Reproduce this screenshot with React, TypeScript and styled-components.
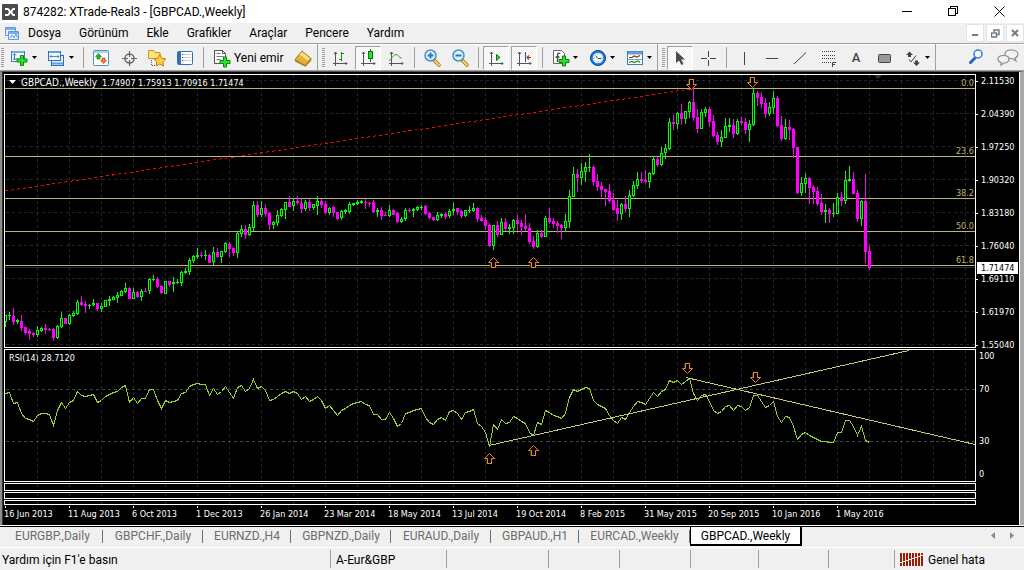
import React from "react";
import styled, { createGlobalStyle, css } from "styled-components";

const UI_FONT = 'Roboto, "Noto Sans", sans-serif';
const CHART_FONT = '"DejaVu Sans Condensed", "DejaVu Sans", sans-serif';

const GlobalStyle = createGlobalStyle`
  * { box-sizing: border-box; }
  body { margin: 0; background: #f0f0f0; font-family: ${UI_FONT}; font-size: 12px; color: #000; }
  button { font: inherit; color: inherit; border: 0; background: none; padding: 0; margin: 0; }
`;

const Window = styled.div`
  display: flex;
  flex-direction: column;
  min-height: 100vh;
  overflow: hidden;
`;

/* ---------- title and menu ---------- */

const TitleBar = styled.header`
  display: flex;
  align-items: center;
  height: 23px;
  padding: 0 2px;
  background: #fff;
`;

const Title = styled.h1`
  flex: 1;
  margin: 0 0 0 5px;
  font-size: 12px;
  line-height: 20px;
  font-weight: 400;
  white-space: nowrap;
`;

const WindowButton = styled.button`
  display: flex;
  align-items: center;
  justify-content: center;
  width: 46px;
  height: 22px;
`;

const MenuBar = styled.nav`
  display: flex;
  align-items: center;
  height: 20px;
  padding-left: 4px;
`;

const MenuList = styled.div`
  display: flex;
  flex: 1;
  gap: 18px;
  padding-left: 8px;
`;

const MenuItem = styled.button`
  line-height: 18px;
  white-space: nowrap;
`;

const MdiButtons = styled.div`
  display: flex;
  gap: 2px;
`;

const MdiButton = styled.button`
  display: flex;
  align-items: center;
  justify-content: center;
  width: 18px;
  height: 18px;
  border: 1px solid #e3e3e3;
  background: #fff;
`;

/* ---------- toolbar ---------- */

const ToolBar = styled.div`
  display: flex;
  align-items: stretch;
  height: 28px;
  border-top: 1px solid #a0a0a0;
  border-bottom: 1px solid #a0a0a0;
  box-shadow: inset 0 1px #fff;
`;

const ToolGroup = styled.div`
  display: flex;
  align-items: center;
  gap: 2px;
  padding: 1px 1px 0;
  border-right: 1px solid #a0a0a0;
  & + & {
    margin-left: 3px;
  }
`;

const Grip = styled.span`
  width: 3px;
  height: 20px;
  background: repeating-linear-gradient(#a0a0a0 0 1px, transparent 1px 2px);
`;

const Separator = styled.span`
  width: 1px;
  height: 21px;
  margin: 0 2px 0 3px;
  background: #a0a0a0;
`;

const ToolButton = styled.button<{ $pressed?: boolean }>`
  display: flex;
  align-items: center;
  justify-content: center;
  width: 26px;
  height: 24px;
  border: 1px solid transparent;
  ${(p) =>
    p.$pressed &&
    css`
      border-color: #a0a0a0 #fff #fff #a0a0a0;
      background: repeating-conic-gradient(#fff 0 25%, #f0f0f0 0 50%) 0 0 / 2px 2px;
    `}
`;

const DropButton = styled(ToolButton)`
  width: 35px;
  justify-content: flex-start;
  padding-left: 3px;
  gap: 2px;
`;

const TextButton = styled(ToolButton)`
  width: 80px;
  justify-content: flex-start;
  padding-left: 4px;
  gap: 3px;
  white-space: nowrap;
`;

const ToolEnd = styled.div`
  display: flex;
  flex: 1;
  align-items: center;
  justify-content: flex-end;
  gap: 6px;
  padding-right: 3px;
`;

/* ---------- chart ---------- */

const ChartFrame = styled.main`
  flex: 1;
  padding: 2px 0 0 2px;
  border-left: 2px solid #8c8c8c;
  border-right: 4px solid #a9a9a9;
  border-top: 1px solid #555;
  box-shadow: inset -1px 0 #fff, inset 1px 0 #333;
  background: #000;
  color: #fff;
  font-family: ${CHART_FONT};
  font-size: 9px;
  line-height: 12px;
`;

const PaneRow = styled.div`
  display: flex;
  margin-bottom: 1px;
`;

const Pane = styled.section<{ $height: number }>`
  position: relative;
  flex: 1;
  min-width: 0;
  height: ${(p) => p.$height}px;
  border: 1px solid #fff;
  overflow: hidden;
`;

const Drawing = styled.svg`
  display: block;
  width: 100%;
  height: 100%;
  font-family: ${CHART_FONT};
  font-size: 9px;
`;

const PaneLabel = styled.div`
  position: absolute;
  top: 2px;
  left: 4px;
  display: flex;
  align-items: baseline;
  gap: 5px;
  white-space: pre;
`;

const SymbolName = styled.span`
  font-size: 10px;
`;

const Axis = styled.div`
  position: relative;
  width: 44px;
  height: 0;
  padding-top: 1px;
`;

const AxisLabel = styled.div<{ $space: number; $tick?: boolean }>`
  display: flex;
  align-items: center;
  gap: ${(p) => (p.$tick ? 3 : 1)}px;
  height: 12px;
  margin-bottom: ${(p) => p.$space}px;
  &::before {
    content: "";
    width: 2px;
    height: 1px;
    background: ${(p) => (p.$tick ? "#fff" : "transparent")};
  }
`;

const PriceTag = styled.div`
  position: absolute;
  top: 188px;
  left: 1px;
  right: 2px;
  padding-left: 4px;
  background: #fff;
  color: #000;
`;

const TimeAxis = styled.div`
  display: flex;
  height: 19px;
  overflow: hidden;
`;

const TimeLabel = styled.div`
  flex: none;
  width: 64px;
  white-space: nowrap;
  &::before {
    content: "";
    display: block;
    width: 1px;
    height: 2px;
    margin-left: 1px;
    background: #fff;
  }
`;

/* ---------- tabs and status ---------- */

const TabBar = styled.div`
  display: flex;
  align-items: flex-start;
  height: 22px;
  margin-top: 1px;
  padding-left: 2px;
  border-top: 1px solid #000;
  border-bottom: 1px solid #fff;
  box-shadow: 0 -1px #fff;
`;

const Tab = styled.button<{ $width: number; $active?: boolean }>`
  position: relative;
  width: ${(p) => p.$width}px;
  height: 19px;
  line-height: 19px;
  color: #6d6d6d;
  white-space: nowrap;
  &::after {
    content: "";
    display: ${(p) => (p.$active ? "none" : "block")};
    position: absolute;
    right: 0;
    top: 3px;
    bottom: 3px;
    border-right: 1px solid #6d6d6d;
  }
  ${(p) =>
    p.$active &&
    css`
      color: #000;
      background: #fff;
      border: solid #000;
      border-width: 0 2px 2px 1px;
    `}
`;

const TabArrows = styled.div`
  display: flex;
  flex: 1;
  align-items: flex-start;
  justify-content: flex-end;
  gap: 15px;
  padding: 5px 10px 0 0;
`;

const TabArrow = styled.button`
  display: flex;
`;

const StatusBar = styled.footer`
  display: flex;
  align-items: center;
  height: 22px;
`;

const StatusCell = styled.div<{ $width?: number }>`
  display: flex;
  align-items: center;
  gap: 4px;
  height: 18px;
  padding: 1px 0 0 5px;
  white-space: nowrap;
  border-left: 1px solid #a0a0a0;
  ${(p) => (p.$width ? `width: ${p.$width}px;` : "flex: 1; border-left: 0; padding-left: 2px;")}
`;

/* ---------- market data: rising flag, high, top, bottom, low ---------- */

const CANDLES = `
1 315 315 322 327|1 312 315 316 320|0 308 316 322 325|1 319 320 322 324|0 315 321 328 331|0 327 327 333 335|0 329 331 334 340|0 332 333 335 337|1 326 330 335 337|1 327 328 331 332|
0 324 328 330 334|0 328 329 330 331|0 328 329 338 341|1 325 326 338 339|1 312 318 327 328|0 318 318 324 324|1 314 315 324 325|1 311 313 316 317|1 300 302 314 315|0 296 302 305 306|
0 301 304 306 313|1 304 305 306 309|1 299 303 305 306|0 303 303 309 311|1 303 306 309 312|1 300 300 307 307|1 296 299 301 306|1 296 297 300 300|1 292 295 298 303|1 290 291 296 296|
1 283 288 292 293|0 287 288 299 299|1 288 292 299 299|0 291 292 297 298|1 289 291 297 301|0 288 291 292 292|1 278 279 291 294|1 275 279 280 281|0 277 279 287 288|0 285 286 293 294|
1 281 281 294 294|0 281 281 285 287|1 277 282 284 292|1 279 282 283 284|1 271 272 283 286|1 268 271 273 274|1 258 260 272 275|1 255 256 261 263|1 248 255 257 259|0 252 255 256 258|
1 250 255 256 260|0 254 255 263 263|1 247 252 262 265|0 248 252 257 258|1 251 251 257 263|1 242 243 252 253|0 242 244 249 257|0 248 248 253 256|1 232 233 253 258|1 225 229 234 237|
0 225 229 235 239|1 224 227 235 236|1 201 205 228 231|0 201 205 215 217|1 201 208 215 217|0 204 208 214 217|0 212 213 225 230|1 221 222 225 229|1 210 215 223 226|1 208 209 216 217|
1 202 202 210 219|0 196 202 207 207|1 199 201 206 211|0 196 201 203 205|0 199 203 209 213|1 200 202 209 211|0 199 202 208 211|1 204 204 208 210|1 196 201 206 215|0 199 201 205 208|
0 201 204 213 214|1 207 208 213 215|0 206 207 213 217|0 212 212 219 220|1 210 211 218 220|1 209 210 212 214|1 202 204 212 214|1 203 203 205 206|1 200 202 204 205|1 200 201 203 204|
0 199 202 203 209|0 202 203 204 207|0 200 202 212 213|1 208 210 212 217|0 207 210 216 220|0 212 215 216 216|1 205 210 216 217|0 209 210 215 215|0 212 213 222 223|1 217 219 222 223|
1 208 210 219 221|0 208 210 211 212|1 208 209 211 217|1 206 207 210 211|1 205 207 208 210|0 205 206 214 215|0 212 213 218 219|0 217 217 220 221|1 212 215 220 221|1 213 214 216 218|
0 212 214 217 219|1 209 211 216 218|1 203 209 211 215|0 208 208 212 215|0 210 211 216 218|1 210 210 216 217|1 206 210 211 213|1 203 208 211 212|0 207 208 219 222|0 215 218 221 222|
0 217 220 226 230|0 223 225 246 247|1 225 225 246 250|0 221 225 235 237|1 218 222 235 235|0 218 222 229 231|1 224 227 229 234|1 219 220 228 234|0 215 220 224 231|0 220 223 227 235|
0 214 226 229 231|0 223 228 242 244|0 236 241 247 249|1 230 233 247 248|0 230 233 237 238|1 216 218 237 237|0 208 218 222 224|0 218 221 224 228|0 221 223 226 233|0 224 225 228 239|
1 214 221 228 232|1 190 196 222 228|1 167 174 197 197|0 169 174 178 192|1 163 171 178 185|1 162 167 172 182|1 154 167 168 172|0 165 167 182 186|0 174 181 187 191|0 182 186 190 197|
0 189 189 192 206|0 184 191 201 203|0 193 200 210 211|0 200 208 214 221|1 203 204 214 220|0 196 204 209 212|1 190 195 209 217|1 181 185 196 197|1 172 179 186 189|0 172 179 181 183|
0 170 180 182 183|1 172 173 182 188|1 156 159 174 175|0 157 159 165 167|1 147 153 165 166|1 144 148 153 159|1 118 122 149 150|0 115 122 124 130|1 112 113 124 129|0 104 113 119 125|
1 111 111 119 124|1 101 102 112 118|0 88 102 118 121|0 109 117 129 133|1 109 112 129 129|1 107 109 113 117|0 107 109 122 127|0 115 121 136 137|0 132 135 142 145|1 130 137 142 147|
1 118 126 138 138|1 118 125 127 132|0 119 125 134 138|1 119 121 134 135|0 117 121 123 125|0 118 122 130 134|1 120 124 130 142|1 89 93 125 126|0 91 93 98 106|0 92 97 104 108|
0 98 103 114 118|1 102 107 114 116|1 91 98 108 114|0 96 98 126 127|0 116 125 139 141|1 119 127 139 140|0 120 127 130 140|0 128 129 148 158|0 147 147 193 194|1 177 183 193 196|
1 173 178 184 193|0 177 178 188 204|0 185 187 192 204|0 187 191 204 206|0 194 203 212 215|1 204 210 212 223|0 208 210 214 223|1 203 213 214 217|1 193 197 214 214|0 192 197 201 206|
1 171 180 201 204|1 166 179 181 182|0 172 179 194 194|0 190 193 219 222|1 200 201 219 226|0 174 201 252 263|0 246 251 268 270`
  .split("|")
  .map((c) => c.trim().split(" ").map(Number));

const RSI = `393 392 403 402 413 418 419 421 415 413 413 414 425 410 402 408 402 400 391 395 396 395 394 402 400 396 394 392 391 387
385 402 397 403 398 398 389 389 400 408 400 402 401 400 393 392 386 384 383 384 384 395 388 394 391 386 392 398 387 385
391 388 379 388 386 390 400 399 396 393 391 393 391 393 399 396 401 399 396 400 408 405 410 415 410 408 405 403 402 401
404 405 414 414 419 419 412 418 426 423 413 412 410 409 408 417 422 424 419 417 420 411 410 413 419 412 411 409 423 426
432 446 424 429 419 423 422 416 418 421 423 432 435 422 424 410 412 415 416 418 413 397 389 391 389 387 388 400 404 406
408 415 420 423 417 419 412 406 401 402 404 398 392 396 391 389 380 382 380 384 381 378 393 400 395 394 401 410 413 411
406 405 410 405 406 410 407 395 395 401 407 405 401 416 422 416 417 426 439 434 432 435 437 439 441 441 442 442 432 432
420 420 426 435 426 440 442`
  .split(/\s+/)
  .map(Number);

const STEP = 4;
const PRICE_TOP = 75;
const RSI_TOP = 350;
const GREEN = "#00ff00";
const MAGENTA = "#ff00ff";
const KHAKI = "#bdb76b";

const FIB = [
  { y: 13, label: "0.0" },
  { y: 81, label: "23.6" },
  { y: 123, label: "38.2" },
  { y: 156, label: "50.0" },
  { y: 190, label: "61.8" },
];

const PRICES = ["2.11530", "2.04390", "1.97250", "1.90320", "1.83180", "1.76040", "1.69110", "1.61970", "1.55040"];
const DATES = [
  "16 Jun 2013", "11 Aug 2013", "6 Oct 2013", "1 Dec 2013", "26 Jan 2014", "23 Mar 2014", "18 May 2014",
  "13 Jul 2014", "19 Oct 2014", "8 Feb 2015", "31 May 2015", "20 Sep 2015", "10 Jan 2016", "1 May 2016",
];

function VerticalGrid() {
  return (
    <g stroke="#262626" strokeDasharray="3 3" shapeRendering="crispEdges">
      {Array.from({ length: 60 }, (_, i) => (
        <line key={i} x1={32 * (i + 1) + 0.5} x2={32 * (i + 1) + 0.5} y1="0" y2="100%" />
      ))}
    </g>
  );
}

function Arrow({ x, y, down }: { x: number; y: number; down?: boolean }) {
  const d = "M0-5L5 0H2V5H-2V0H-5Z";
  return (
    <g transform={`translate(${x} ${y})${down ? " scale(1 -1)" : ""}`} fill="none">
      <path d="M-3 0V5" stroke="#0a4a10" shapeRendering="crispEdges" />
      <path d={d} stroke="#f08018" fill="#000" />
      <path d="M2 0V5H-2V0M2.500 0H5M-2.500 0H-5" stroke="#f08018" shapeRendering="crispEdges" />
    </g>
  );
}

function PriceDrawing() {
  return (
    <Drawing role="img" aria-label="GBPCAD weekly candles">
      <VerticalGrid />
      <g stroke="#262626" strokeDasharray="3 3" shapeRendering="crispEdges">
        {PRICES.map((p, i) => (
          <line key={p} x1="1" x2="100%" y1={5.5 + 33 * i} y2={5.5 + 33 * i} />
        ))}
      </g>
      <line x1="0" x2="100%" y1="192.5" y2="192.5" stroke="#2a2a2a" shapeRendering="crispEdges" />
      <path d="M869 0h8l-4 4z" fill="#303030" />
      <line x1="0" y1="116" x2="686" y2="14" stroke="#ff0000" strokeDasharray="3 3" shapeRendering="crispEdges" />
      {FIB.map((f) => (
        <line key={f.label} x1="0" x2="100%" y1={f.y + 0.5} y2={f.y + 0.5} stroke={KHAKI} shapeRendering="crispEdges" />
      ))}
      <g shapeRendering="crispEdges">
        {CANDLES.map(([up, high, top, bottom, low], i) => {
          const fill = up ? GREEN : MAGENTA;
          const x = i * STEP;
          const height = Math.max(1, bottom - top);
          return (
            <g key={i}>
              <rect x={x} y={high - PRICE_TOP} width="1" height={Math.max(1, low - high)} fill={fill} />
              <rect x={x - 1} y={top - PRICE_TOP} width="3" height={height} fill={fill} />
              {up && height > 2 ? (
                <rect x={x} y={top - PRICE_TOP + 1} width="1" height={height - 2} fill="#000" />
              ) : null}
            </g>
          );
        })}
      </g>
      <Arrow x={488.5} y={187.5} />
      <Arrow x={528.5} y={187.5} />
      <Arrow x={686.5} y={9.5} down />
      <Arrow x={747.5} y={7.5} down />
      <svg x="100%" overflow="visible">
        {FIB.map((f) => (
          <text key={f.label} x="-1" y={f.y - 2} textAnchor="end" fill={KHAKI}>
            {f.label}
          </text>
        ))}
      </svg>
    </Drawing>
  );
}

function RsiDrawing() {
  return (
    <Drawing role="img" aria-label="RSI">
      <VerticalGrid />
      <g stroke="#2f4f4f" strokeDasharray="3 3" shapeRendering="crispEdges">
        <line x1="1" x2="100%" y1="39.5" y2="39.5" />
        <line x1="1" x2="100%" y1="91.5" y2="91.5" />
      </g>
      <polyline
        points={RSI.map((v, i) => `${i * STEP + 0.5},${v - RSI_TOP + 0.5}`).join(" ")}
        fill="none"
        stroke="#9acd32"
        shapeRendering="crispEdges"
      />
      <g stroke="#cdc673" shapeRendering="crispEdges">
        <line x1="484" y1="95.5" x2="904" y2="0.5" />
        <line x1="681" y1="27.5" x2="970" y2="94.5" />
      </g>
      <Arrow x={484.5} y={108.5} />
      <Arrow x={528.5} y={100.5} />
      <Arrow x={682.5} y={18.5} down />
      <Arrow x={750.5} y={27.5} down />
    </Drawing>
  );
}

/* ---------- icons ---------- */

const ICON = { width: 20, height: 20, viewBox: "0 0 20 20", fill: "none" } as const;

const Caret = () => (
  <svg width="5" height="3" viewBox="0 0 5 3">
    <path d="M0 0h5L2.500 3z" fill="#000" />
  </svg>
);

const Plus = ({ x = 0, y = 0 }: { x?: number; y?: number }) => (
  <path
    transform={`translate(${x} ${y})`}
    d="M4 .5h3V4h3.500v3H7v3.500H4V7H.5V4H4z"
    fill="#2ee02e"
    stroke="#078a07"
  />
);

const NewChartIcon = () => (
  <svg {...ICON}>
    <rect x="1.500" y="3.500" width="13" height="10" fill="#f4faff" stroke="#3b7dbd" />
    <path d="M2 4h12" stroke="#6faee6" strokeWidth="2" />
    <path d="M4.500 6v6M3 7.500l1.500-2L6 7.500M3 11h6" stroke="#4a7fae" />
    <Plus x={6.500} y={7} />
  </svg>
);

const ProfilesIcon = () => (
  <svg {...ICON}>
    <rect x="4.500" y="7.500" width="12" height="10" fill="#dceeff" stroke="#2f6fb5" />
    <rect x="1.500" y="3.500" width="12" height="9" fill="#f4faff" stroke="#2f6fb5" />
    <path d="M2 4h11M5 15.500h11" stroke="#5ea3e0" strokeWidth="2" />
    <path d="M3 8.500h9M4.500 7L3 8.500 4.500 10M10.500 7L12 8.500 10.500 10" stroke="#4a86c0" />
  </svg>
);

const MarketIcon = () => (
  <svg {...ICON}>
    <rect x="2.500" y="2.500" width="15" height="15" rx="1" fill="#fff" stroke="#4a90d0" />
    <path d="M3 4h14" stroke="#a9d3f5" strokeWidth="2" />
    <path d="M7.500 5.500l3 3H9v2.500H6V8.500H4.500z" fill="#22b822" stroke="#0a780a" strokeWidth=".6" />
    <path d="M12.500 15.500l-3-3H11V10h3v2.500h1.500z" fill="#ff7a2a" stroke="#b83a00" strokeWidth=".6" />
  </svg>
);

const TargetIcon = () => (
  <svg {...ICON} stroke="#666">
    <circle cx="10.500" cy="10.500" r="4.500" strokeWidth="1.500" />
    <path d="M10.500 3v6M10.500 12v6M3 10.500h6M12 10.500h6" strokeWidth="1.200" />
  </svg>
);

const FavoritesIcon = () => (
  <svg {...ICON}>
    <path d="M1.500 10.500v-8h5l1.500 2h5v6z" fill="#ffe27a" stroke="#c39a20" />
    <path d="M4.500 12v5.500M5 17.500h4" stroke="#555" strokeDasharray="1 1" />
    <path
      d="M12.800 6.500l1.900 3.800 4.100.6-3 2.900.7 4.200-3.700-2-3.700 2 .7-4.200-3-2.900 4.100-.6z"
      fill="#ffd23a"
      stroke="#b98210"
    />
  </svg>
);

const DataWindowIcon = () => (
  <svg {...ICON}>
    <rect x="2.500" y="3.500" width="15" height="13" rx="1" fill="#fff" stroke="#2f6fb5" />
    <path d="M4.500 4v12" stroke="#2f6fb5" strokeWidth="3" />
    <path d="M8 6.500h8M8 9.500h8M8 12.500h8" stroke="#b9cfe6" />
    <path d="M7 6.500h1M7 9.500h1M7 12.500h1" stroke="#c00" />
  </svg>
);

const NewOrderIcon = () => (
  <svg {...ICON} width={18} viewBox="1 0 18 20">
    <path d="M2.500 2.500h8l3 3v10h-11z" fill="#fff" stroke="#555" />
    <path d="M10.500 2.500v3h3" stroke="#555" />
    <path d="M4.500 5.500h4M4.500 8.500h7M4.500 11.500h4" stroke="#777" />
    <Plus x={7.500} y={8.500} />
  </svg>
);

const BookIcon = () => (
  <svg {...ICON}>
    <path d="M2 11.500l7-8.500 9 7.500-6 7z" fill="#e6b23a" stroke="#a8761a" />
    <path d="M2 11.500l10 6 6-7v2L12.500 18.500 2.500 13.500z" fill="#c58e20" stroke="#a8761a" strokeWidth=".6" />
    <path d="M9 4l8 6.500-2 2-8.500-6z" fill="#fbe08a" />
  </svg>
);

const AXES = "M5.500 4v14M3 15.500h14M4 6l1.500-2L7 6M15.500 14l1.500 1.500-1.500 1.500";

const BarsIcon = () => (
  <svg {...ICON} stroke="#555">
    <path d={AXES} />
    <path d="M11.500 4v9M9 11.500h2.500M11.500 5.500H14" stroke="#0a900a" />
  </svg>
);

const CandlesIcon = () => (
  <svg {...ICON} stroke="#555">
    <path d={AXES} />
    <path d="M12.500 1v13" stroke="#0a780a" />
    <rect x="10.500" y="3.500" width="4" height="7" fill="#2ee02e" stroke="#0a780a" />
  </svg>
);

const LineIcon = () => (
  <svg {...ICON} stroke="#555">
    <path d={AXES} />
    <path d="M3 12.500c3-1 4-6 7-6 2 0 3 3 6 4" stroke="#3aa03a" />
  </svg>
);

const ZoomIcon = ({ plus }: { plus?: boolean }) => (
  <svg {...ICON}>
    <path d="M12.500 12.500l4.500 4.500" stroke="#9a7210" strokeWidth="3.500" strokeLinecap="round" />
    <path d="M13 13l4 4" stroke="#ffd75a" strokeWidth="2" strokeLinecap="round" />
    <circle cx="8.500" cy="7.500" r="5.500" fill="#dff1ff" stroke="#4a90c8" strokeWidth="1.500" />
    <path d={plus ? "M5.500 7.500h6M8.500 4.500v6" : "M5.500 7.500h6"} stroke="#2a78b8" strokeWidth="2" />
  </svg>
);

const AutoScrollIcon = () => (
  <svg {...ICON} stroke="#555">
    <path d={AXES} />
    <path d="M10.500 6.500v6l3.500-3z" fill="#44d044" stroke="#0a780a" />
  </svg>
);

const ShiftIcon = () => (
  <svg {...ICON} stroke="#555">
    <path d={AXES} />
    <path d="M11.500 4v10" stroke="#2060a0" />
    <path d="M17 9.500h-4M15 7.500l-2 2 2 2" stroke="#c03a10" strokeWidth="1.200" />
  </svg>
);

const IndicatorIcon = () => (
  <svg {...ICON}>
    <path d="M2.500 2.500h8l3 3v10h-11z" fill="#fff" stroke="#666" />
    <path d="M9 5.500c-2-1-2.500.5-2.500 2.500v6M4.500 9h4" stroke="#444" strokeWidth="1.300" />
    <Plus x={7.500} y={7.500} />
  </svg>
);

const ClockIcon = () => (
  <svg {...ICON}>
    <circle cx="10" cy="10" r="6.500" fill="#eef7ff" stroke="#1c7ce0" strokeWidth="2.500" />
    <circle cx="10" cy="10" r="7.500" stroke="#0d4a90" />
    <path d="M7.500 7.500l2.500 3h3" stroke="#444" />
    <path d="M10 5.500v1M10 13.500v1M5.500 10h1M13.500 10h1" stroke="#666" />
  </svg>
);

const TemplateIcon = () => (
  <svg {...ICON}>
    <rect x="2.500" y="3.500" width="15" height="13" fill="#fff" stroke="#3b7dbd" />
    <path d="M3 5h14" stroke="#5ea3e0" strokeWidth="3" />
    <path d="M4 9.500h3l2-1.500 3 1 3-1.500" stroke="#a02a10" strokeWidth="1.200" />
    <path d="M3 11.500h14" stroke="#3b7dbd" strokeWidth=".7" />
    <path d="M4 14.500l3-1 2 1 4-1.500 2 1.500" stroke="#1a901a" strokeWidth="1.200" />
  </svg>
);

const CursorIcon = () => (
  <svg {...ICON}>
    <path d="M6 3v12l3-2.500 2.500 4.500 2-1-2.300-4.500H15z" fill="#4a4a4a" />
  </svg>
);

const CrossIcon = () => (
  <svg {...ICON} stroke="#444" shapeRendering="crispEdges">
    <path d="M10.500 3v6M10.500 12v6M3 10.500h6M12 10.500h6" />
  </svg>
);

const StrokeIcon = ({ d }: { d: string }) => (
  <svg {...ICON} stroke="#444">
    <path d={d} />
  </svg>
);

const FibIcon = () => (
  <svg {...ICON} stroke="#444">
    <path d="M4 3.500h13M4 7.500h13M4 10.500h13M4 14.500h9" strokeDasharray="1 1" shapeRendering="crispEdges" />
    <path d="M14.500 19v-4.500H18M14.500 16.500H17" />
  </svg>
);

const LetterIcon = styled.span`
  font: 500 13px/20px Roboto, sans-serif;
  color: #444;
`;

const RectIcon = () => (
  <svg {...ICON}>
    <rect x="4.500" y="6.500" width="12" height="8" rx="1" fill="#999" stroke="#444" />
  </svg>
);

const ArrowsIcon = () => (
  <svg {...ICON} fill="#444">
    <path d="M3 7l3.500-3.500L10 7H8v2H5V7z" />
    <path d="M10 14.500l3.500 3.500 3.500-3.500h-2v-2h-3v2z" />
    <path d="M6 11.500l2 2.500 5-6.500" fill="none" stroke="#444" />
  </svg>
);

const SearchIcon = () => (
  <svg width="16" height="18" viewBox="0 0 16 18" fill="none">
    <path d="M7 10l-4.500 4.500" stroke="#2a62c8" strokeWidth="3" strokeLinecap="round" />
    <circle cx="10" cy="6" r="4" fill="#f6fbff" stroke="#3b78e0" strokeWidth="1.500" />
  </svg>
);

const ChatIcon = () => (
  <svg width="24" height="20" viewBox="0 0 24 20" fill="#f2f2f2" stroke="#8a8a8a" strokeWidth="1.200">
    <path d="M15 3c4 0 7 1.800 7 4.300 0 1.800-1.200 3-3 3.700l1 3-3.500-2.500C12 11.700 9 10 9 7.300 9 4.800 11 3 15 3z" />
    <path d="M7.500 8.500c3.300 0 5.500 1.500 5.500 3.800 0 2.200-2.300 3.700-5 3.700L5 18l.2-2.500C3.200 15 2 13.800 2 12.300c0-2.300 2.200-3.800 5.500-3.800z" />
  </svg>
);

const LogoIcon = () => (
  <svg width="16" height="16" viewBox="0 0 16 16">
    <rect width="16" height="16" rx="1" fill="#4b4b4b" />
    <path
      d="M3 5h2.500c2 0 1.500 3 3 3H10M3 11h2.500c2 0 1.500-3 3-3M13 5h-1.500C10 5 10 8 8.500 8M13 11h-1.500C10 11 10 8 8.500 8"
      fill="none"
      stroke="#fff"
      strokeWidth="2"
    />
  </svg>
);

const DocIcon = () => (
  <svg width="16" height="15" viewBox="0 0 16 15" fill="#e8f3ff" stroke="#5a9ae0">
    <path d="M1.500 1.500h10v8h-10z" />
    <path d="M4.500 5.500h10v8h-10z" />
    <path d="M2 3h9M5 7h9" strokeWidth="1.500" />
    <path d="M6 12l2-3 2 3 2-4 1.500 4" fill="none" />
  </svg>
);

const SignalIcon = () => (
  <svg width="24" height="14" viewBox="0 0 24 14" shapeRendering="crispEdges">
    {Array.from({ length: 8 }, (_, i) => (
      <g key={i} fill="#9b1c00">
        <rect x={i * 3} y="0" width="2" height={9 - i} />
        <rect x={i * 3} y={10 - i} width="2" height={3 + i} />
      </g>
    ))}
  </svg>
);

const MENU = ["Dosya", "Görünüm", "Ekle", "Grafikler", "Araçlar", "Pencere", "Yardım"];

const TABS = [
  { name: "EURGBP.,Daily", width: 101 },
  { name: "GBPCHF.,Daily", width: 100 },
  { name: "EURNZD.,H4", width: 88 },
  { name: "GBPNZD.,Daily", width: 100 },
  { name: "EURAUD.,Daily", width: 100 },
  { name: "GBPAUD.,H1", width: 88 },
  { name: "EURCAD.,Weekly", width: 111 },
  { name: "GBPCAD.,Weekly", width: 112 },
];

export default function App() {
  return (
    <>
      <GlobalStyle />
      <Window>
        <TitleBar>
          <LogoIcon />
          <Title>874282: XTrade-Real3 - [GBPCAD.,Weekly]</Title>
          <WindowButton aria-label="Minimize">
            <svg width="10" height="11"><path d="M0 5.500h10" stroke="#000" shapeRendering="crispEdges" /></svg>
          </WindowButton>
          <WindowButton aria-label="Restore">
            <svg width="11" height="11" fill="none" stroke="#000" shapeRendering="crispEdges">
              <path d="M.5 2.500h7v7h-7zM2.500 2V.5h7v7H8" />
            </svg>
          </WindowButton>
          <WindowButton aria-label="Close">
            <svg width="11" height="11"><path d="M.5.5l10 10M10.500.5l-10 10" stroke="#000" /></svg>
          </WindowButton>
        </TitleBar>

        <MenuBar>
          <DocIcon />
          <MenuList>
            {MENU.map((m) => (
              <MenuItem key={m}>{m}</MenuItem>
            ))}
          </MenuList>
          <MdiButtons>
            <MdiButton aria-label="Minimize chart">
              <svg width="8" height="8"><path d="M1 6h6" stroke="#6b7c8c" strokeWidth="2" /></svg>
            </MdiButton>
            <MdiButton aria-label="Restore chart">
              <svg width="9" height="9" fill="none" stroke="#6b7c8c">
                <path d="M.5 4h5v4h-5zM3 3V1h5v4.500H6" strokeWidth="1.500" />
              </svg>
            </MdiButton>
            <MdiButton aria-label="Close chart">
              <svg width="8" height="8"><path d="M1 1l6 6M7 1L1 7" stroke="#6b7c8c" strokeWidth="2" /></svg>
            </MdiButton>
          </MdiButtons>
        </MenuBar>

        <ToolBar>
          <ToolGroup>
            <Grip />
            <DropButton aria-label="New chart"><NewChartIcon /><Caret /></DropButton>
            <DropButton aria-label="Profiles"><ProfilesIcon /><Caret /></DropButton>
            <Separator />
            <ToolButton aria-label="Market watch"><MarketIcon /></ToolButton>
            <ToolButton aria-label="Data window"><TargetIcon /></ToolButton>
            <ToolButton aria-label="Navigator"><FavoritesIcon /></ToolButton>
            <ToolButton aria-label="Terminal"><DataWindowIcon /></ToolButton>
            <Separator />
            <TextButton><NewOrderIcon />Yeni emir</TextButton>
            <ToolButton aria-label="MetaEditor"><BookIcon /></ToolButton>
          </ToolGroup>
          <ToolGroup>
            <Grip />
            <ToolButton aria-label="Bars"><BarsIcon /></ToolButton>
            <ToolButton aria-label="Candlesticks" $pressed><CandlesIcon /></ToolButton>
            <ToolButton aria-label="Line"><LineIcon /></ToolButton>
            <Separator />
            <ToolButton aria-label="Zoom in"><ZoomIcon plus /></ToolButton>
            <ToolButton aria-label="Zoom out"><ZoomIcon /></ToolButton>
            <Separator />
            <ToolButton aria-label="Auto scroll" $pressed><AutoScrollIcon /></ToolButton>
            <ToolButton aria-label="Chart shift" $pressed><ShiftIcon /></ToolButton>
            <Separator />
            <DropButton aria-label="Indicators"><IndicatorIcon /><Caret /></DropButton>
            <DropButton aria-label="Periods"><ClockIcon /><Caret /></DropButton>
            <DropButton aria-label="Templates"><TemplateIcon /><Caret /></DropButton>
          </ToolGroup>
          <ToolGroup>
            <Grip />
            <ToolButton aria-label="Cursor" $pressed><CursorIcon /></ToolButton>
            <ToolButton aria-label="Crosshair"><CrossIcon /></ToolButton>
            <Separator />
            <ToolButton aria-label="Vertical line"><StrokeIcon d="M10.500 4v13" /></ToolButton>
            <ToolButton aria-label="Horizontal line"><StrokeIcon d="M4 10.500h12" /></ToolButton>
            <ToolButton aria-label="Trendline"><StrokeIcon d="M4 16L16 4.500" /></ToolButton>
            <ToolButton aria-label="Fibonacci"><FibIcon /></ToolButton>
            <ToolButton aria-label="Text"><LetterIcon>A</LetterIcon></ToolButton>
            <ToolButton aria-label="Label"><RectIcon /></ToolButton>
            <DropButton aria-label="Arrows"><ArrowsIcon /><Caret /></DropButton>
          </ToolGroup>
          <ToolEnd>
            <ToolButton aria-label="Search"><SearchIcon /></ToolButton>
            <ToolButton aria-label="Chat"><ChatIcon /></ToolButton>
          </ToolEnd>
        </ToolBar>

        <ChartFrame>
          <PaneRow>
            <Pane $height={274}>
              <PriceDrawing />
              <PaneLabel>
                <svg width="7" height="6"><path d="M0 0h7L3.500 4z" fill="#fff" /></svg>
                <SymbolName>GBPCAD.,Weekly</SymbolName>
                <span>1.74907 1.75913 1.70916 1.71474</span>
              </PaneLabel>
            </Pane>
            <Axis>
              {PRICES.map((p) => (
                <AxisLabel key={p} $space={21} $tick>{p}</AxisLabel>
              ))}
              <PriceTag>1.71474</PriceTag>
            </Axis>
          </PaneRow>
          <PaneRow>
            <Pane $height={133}>
              <RsiDrawing />
              <PaneLabel>RSI(14) 28.7120</PaneLabel>
            </Pane>
            <Axis>
              <AxisLabel $space={21}>100</AxisLabel>
              <AxisLabel $space={40}>70</AxisLabel>
              <AxisLabel $space={21}>30</AxisLabel>
              <AxisLabel $space={0}>0</AxisLabel>
            </Axis>
          </PaneRow>
          {[8, 7, 5].map((h) => (
            <PaneRow key={h}>
              <Pane $height={h}>
                <Drawing><VerticalGrid /></Drawing>
              </Pane>
              <Axis />
            </PaneRow>
          ))}
          <TimeAxis>
            {DATES.map((d) => (
              <TimeLabel key={d}>{d}</TimeLabel>
            ))}
          </TimeAxis>
        </ChartFrame>

        <TabBar role="tablist">
          {TABS.map((t, i) => (
            <Tab key={t.name} role="tab" $width={t.width} $active={i === TABS.length - 1}>
              {t.name}
            </Tab>
          ))}
          <TabArrows>
            <TabArrow aria-label="Previous tab">
              <svg width="4" height="7"><path d="M4 0v7L0 3.500z" fill="#8a8a8a" /></svg>
            </TabArrow>
            <TabArrow aria-label="Next tab">
              <svg width="4" height="7"><path d="M0 0v7l4-3.500z" fill="#8a8a8a" /></svg>
            </TabArrow>
          </TabArrows>
        </TabBar>

        <StatusBar>
          <StatusCell>Yardım için F1'e basın</StatusCell>
          <StatusCell $width={116}>A-Eur&amp;GBP</StatusCell>
          <StatusCell $width={102} />
          <StatusCell $width={71} />
          <StatusCell $width={71} />
          <StatusCell $width={68} />
          <StatusCell $width={70} />
          <StatusCell $width={66} />
          <StatusCell $width={130}>
            <SignalIcon />
            Genel hata
          </StatusCell>
        </StatusBar>
      </Window>
    </>
  );
}
